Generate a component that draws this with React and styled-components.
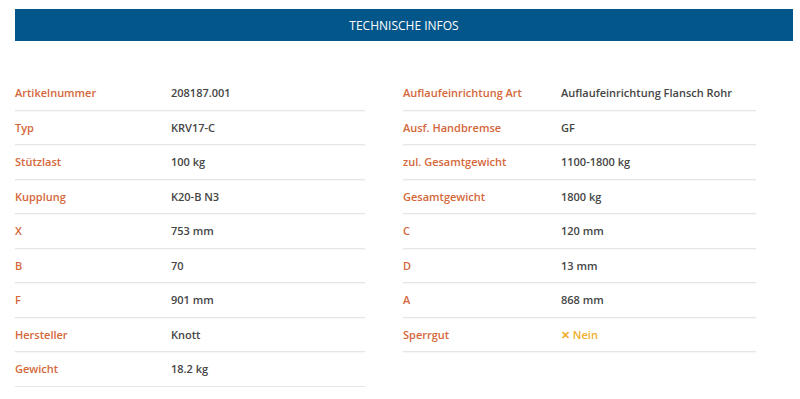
import * as React from 'react'
import styled, { createGlobalStyle } from 'styled-components'

const GlobalStyle = createGlobalStyle`
    body {
        margin: 0;
        background: #fff;
        font-family: "Open Sans", "Liberation Sans", sans-serif;
    }
`;

const Page = styled.div`
    padding: 9px 7px 0 15px;
`;

const HeaderBar = styled.div`
    height: 32px;
    background: #03568a;
    color: #fff;
    font-size: 12px;
    display: flex;
    align-items: center;
    justify-content: center;
`;

const Columns = styled.div`
    display: grid;
    grid-template-columns: 388px 1fr;
    margin-top: 35px;
`;

const SpecList = styled.ul`
    list-style: none;
    margin: 0;
    padding: 0;
    width: ${props => props.width};
`;

const SpecRow = styled.li`
    display: flex;
    align-items: center;
    height: 33.5px;
    border-bottom: 1px solid #e6e6e6;
    box-shadow: 0 1px 1px rgba(0, 0, 0, 0.03);
    font-size: 11px;
    font-weight: 600;
`;

const SpecKey = styled.span`
    flex: 0 0 ${props => props.keyWidth};
    color: #d4673a;
`;

const SpecValue = styled.span`
    color: ${props => (props.negative ? '#f0ae2c' : '#454545')};
`;

const leftSpecs = [
    ['Artikelnummer', '208187.001'],
    ['Typ', 'KRV17-C'],
    ['Stützlast', '100 kg'],
    ['Kupplung', 'K20-B N3'],
    ['X', '753 mm'],
    ['B', '70'],
    ['F', '901 mm'],
    ['Hersteller', 'Knott'],
    ['Gewicht', '18.2 kg'],
];

const rightSpecs = [
    ['Auflaufeinrichtung Art', 'Auflaufeinrichtung Flansch Rohr'],
    ['Ausf. Handbremse', 'GF'],
    ['zul. Gesamtgewicht', '1100-1800 kg'],
    ['Gesamtgewicht', '1800 kg'],
    ['C', '120 mm'],
    ['D', '13 mm'],
    ['A', '868 mm'],
    ['Sperrgut', '✕ Nein', true],
];

const SpecColumn = ({ specs, width, keyWidth }) => (
    <SpecList width={width}>
        {specs.map(([key, value, negative]) => (
            <SpecRow key={key}>
                <SpecKey keyWidth={keyWidth}>{key}</SpecKey>
                <SpecValue negative={negative}>{value}</SpecValue>
            </SpecRow>
        ))}
    </SpecList>
);

const App = () => (
    <Page>
        <GlobalStyle />
        <HeaderBar>TECHNISCHE INFOS</HeaderBar>
        <Columns>
            <SpecColumn specs={leftSpecs} width="350px" keyWidth="156px" />
            <SpecColumn specs={rightSpecs} width="353px" keyWidth="158px" />
        </Columns>
    </Page>
);

export default App;
